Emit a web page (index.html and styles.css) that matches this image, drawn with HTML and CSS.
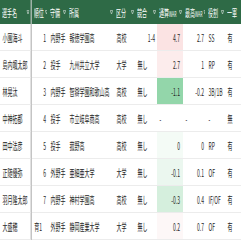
FILE: index.html
```html
<!DOCTYPE html>
<html lang="ja">
<head>
<meta charset="utf-8">
<link rel="stylesheet" href="styles.css">
</head>
<body>
<div class="frame">
<div class="viewport">
<table class="sheet">
<colgroup>
<col class="w-name"><col class="w-rank"><col class="w-pos"><col class="w-team"><col class="w-kind"><col class="w-comp"><col class="w-war"><col class="w-best"><col class="w-role"><col class="w-top">
</colgroup>
<thead>
<tr>
<th class="frozen"><div class="hcell"><span class="hd">選手名</span><svg class="flt" viewBox="0 0 6 6"><path d="M0.5 1.5h5L3 5z"/></svg></div></th>
<th><div class="hcell"><span class="hd">順位</span><svg class="flt" viewBox="0 0 6 6"><path d="M0.5 1.5h5L3 5z"/></svg></div></th>
<th><div class="hcell"><span class="hd">守備</span><svg class="flt" viewBox="0 0 6 6"><path d="M0.5 1.5h5L3 5z"/></svg></div></th>
<th><div class="hcell"><span class="hd">所属</span><svg class="flt" viewBox="0 0 6 6"><path d="M0.5 1.5h5L3 5z"/></svg></div></th>
<th><div class="hcell"><span class="hd">区分</span><svg class="flt" viewBox="0 0 6 6"><path d="M0.5 1.5h5L3 5z"/></svg></div></th>
<th><div class="hcell"><span class="hd">競合</span><svg class="flt" viewBox="0 0 6 6"><path d="M0.5 1.5h5L3 5z"/></svg></div></th>
<th><div class="hcell"><span class="hd">通算<small>WAR</small></span><svg class="flt" viewBox="0 0 6 6"><path d="M0.5 1.5h5L3 5z"/></svg></div></th>
<th><div class="hcell"><span class="hd">最高<small>WAR</small></span><svg class="flt" viewBox="0 0 6 6"><path d="M0.5 1.5h5L3 5z"/></svg></div></th>
<th><div class="hcell"><span class="hd">役割</span><svg class="flt" viewBox="0 0 6 6"><path d="M0.5 1.5h5L3 5z"/></svg></div></th>
<th><div class="hcell"><span class="hd">一軍</span></div></th>
</tr>
</thead>
<tbody>
<tr><td class="frozen">小園海斗</td><td class="num">1</td><td>内野手</td><td>報徳学園高</td><td>高校</td><td class="num">1-4</td><td class="war" style="background:#fbe3e3">4.7</td><td class="num">2.7</td><td>SS</td><td>有</td></tr>
<tr><td class="frozen">島内颯太郎</td><td class="num">2</td><td>投手</td><td>九州共立大学</td><td>大学</td><td>無し</td><td class="war" style="background:#fcecec">2.7</td><td class="num">1</td><td>RP</td><td>有</td></tr>
<tr><td class="frozen">林晃汰</td><td class="num">3</td><td>内野手</td><td>智辯学園和歌山高</td><td>高校</td><td>無し</td><td class="war" style="background:#93d6aa">-1.1</td><td class="num">-0.2</td><td>3B/1B</td><td>有</td></tr>
<tr><td class="frozen">中神拓都</td><td class="num">4</td><td>投手</td><td>市立岐阜商高</td><td>高校</td><td>無し</td><td>-</td><td>-</td><td>-</td><td>無</td></tr>
<tr><td class="frozen">田中法彦</td><td class="num">5</td><td>投手</td><td>菰野高</td><td>高校</td><td>無し</td><td class="war" style="background:#f4fbf6">0</td><td class="num">0</td><td>RP</td><td>有</td></tr>
<tr><td class="frozen">正随優弥</td><td class="num">6</td><td>外野手</td><td>亜細亜大学</td><td>大学</td><td>無し</td><td class="war" style="background:#ebf7ef">-0.1</td><td class="num">0.1</td><td>OF</td><td>有</td></tr>
<tr><td class="frozen">羽月隆太郎</td><td class="num">7</td><td>内野手</td><td>神村学園高</td><td>高校</td><td>無し</td><td class="war" style="background:#d5efdd">-0.3</td><td class="num">0.4</td><td>IF/OF</td><td>有</td></tr>
<tr><td class="frozen">大盛穂</td><td>育1</td><td>外野手</td><td>静岡産業大学</td><td>大学</td><td>無し</td><td class="war" style="background:#fdf7f7">0.2</td><td class="num">0.7</td><td>OF</td><td>有</td></tr>
</tbody>
</table>
</div>
</div>
</body>
</html>
```

FILE: styles.css
```css
html, body {
  margin: 0;
  padding: 0;
  background: #ffffff;
  overflow: hidden;
}
.frame {
  width: 241px;
  height: 241px;
  overflow: hidden;
}
.viewport {
  width: 482px;
  overflow: hidden;
  transform: scaleX(0.5);
  transform-origin: 0 0;
}
.sheet {
  border-collapse: collapse;
  table-layout: fixed;
  width: 482px;
  font-family: "Noto Sans CJK JP", "Noto Sans", sans-serif;
  font-size: 10px;
  color: #262626;
}
.w-name { width: 62px; }
.w-rank { width: 34px; }
.w-pos { width: 38px; }
.w-team { width: 94px; }
.w-kind { width: 42px; }
.w-comp { width: 44px; }
.w-war { width: 52px; }
.w-best { width: 46px; }
.w-role { width: 38px; }
.w-top { width: 32px; }
thead th {
  background: #2e6a46;
  color: #ffffff;
  font-weight: normal;
  height: 24px;
  padding: 0 2px 0 4px;
  text-align: left;
  white-space: nowrap;
  overflow: hidden;
}
.hcell {
  display: flex;
  align-items: center;
  justify-content: space-between;
  gap: 2px;
  overflow: hidden;
}
.hd {
  flex-shrink: 0;
  white-space: nowrap;
}
.hd small {
  font-size: 7px;
}
.flt {
  flex-shrink: 0;
  width: 6px;
  height: 6px;
  fill: none;
  stroke: #c6d4cc;
  stroke-width: 0.9;
}
tbody td {
  height: 26px;
  padding: 0 4px 0 5px;
  border-bottom: 1px solid #ececec;
  white-space: nowrap;
  overflow: hidden;
  text-align: left;
}
td.num {
  text-align: right;
}
td.war {
  text-align: right;
  padding-right: 6px;
}
.frozen {
  border-right: 3px solid #c4c4c4;
}
thead th.frozen {
  border-right: 3px solid #9fb3a7;
}
```
